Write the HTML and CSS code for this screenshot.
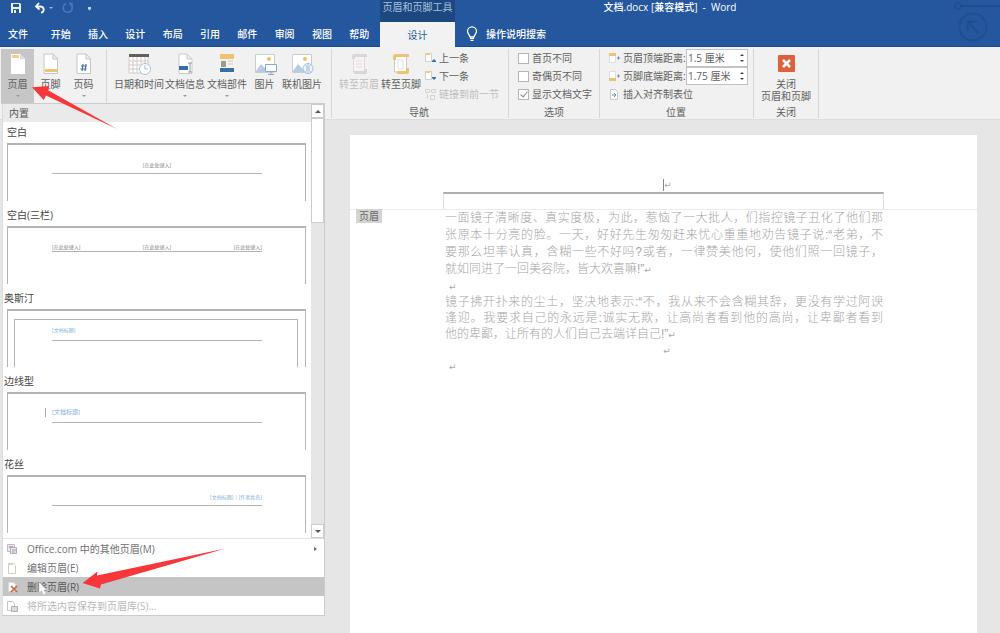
FILE: index.html
```html
<!DOCTYPE html>
<html lang="zh-CN">
<head>
<meta charset="utf-8">
<title>文档.docx [兼容模式] - Word</title>
<link rel="stylesheet" href="styles.css">
</head>
<body>
<header class="titlebar">
  <div class="title-row">
    <div class="quick">
      <button class="qbtn" aria-label="保存"><svg width="12" height="12" viewBox="0 0 12 12"><path d="M1 1h9l1 1v9H1z" fill="#e8f0fa"/><path d="M3 2h6v3H3zM3 7h6v4H3z" fill="#2457a0"/><path d="M4 8h2v3H4z" fill="#e8f0fa"/></svg></button>
      <button class="qbtn" aria-label="撤消"><svg width="20" height="12" viewBox="0 0 20 12"><path d="M5 1L2 4.500l3.500 3M2.500 4.500H6c5 0 4.500 6 1 6" fill="none" stroke="#f4f8ff" stroke-width="1.800"/><path d="M15 5h4l-2 2z" fill="#9fbbe0"/></svg></button>
      <button class="qbtn" aria-label="恢复"><svg width="12" height="12" viewBox="0 0 12 12"><path d="M4 1.500C1 3 .5 6 2 8.500c2 3 7 2 8-1 .7-2 0-4-1.500-5.500M7 1.500h3v3" fill="none" stroke="#4f7ab8" stroke-width="1.400"/></svg></button>
      <button class="qbtn" aria-label="自定义快速访问工具栏"><svg width="6" height="12" viewBox="0 0 6 12"><path d="M2 5h3v2L3.500 8.500 2 7z" fill="#c3d5ee"/></svg></button>
    </div>
    <div class="tool-title">页眉和页脚工具</div>
    <div class="doc-title">文档.docx [兼容模式]&nbsp; -&nbsp; Word</div>
  </div>
  <nav class="tabs">
    <div class="main-tabs">
      <button class="tab file">文件</button>
      <button class="tab">开始</button>
      <button class="tab">插入</button>
      <button class="tab">设计</button>
      <button class="tab">布局</button>
      <button class="tab">引用</button>
      <button class="tab">邮件</button>
      <button class="tab">审阅</button>
      <button class="tab">视图</button>
      <button class="tab">帮助</button>
    </div>
    <button class="tab active">设计</button>
    <button class="tell"><svg width="12" height="16" viewBox="0 0 12 16"><path d="M4 11C4 9 1.500 8 1.500 5.300a4.500 4.500 0 0 1 9 0C10.500 8 8 9 8 11z" fill="none" stroke="#fff" stroke-width="1.300"/><path d="M4 12.500h4M4.500 14.300h3" stroke="#fff" stroke-width="1.200"/></svg>操作说明搜索</button>
  </nav>
  <svg class="decor" width="50" height="46" viewBox="0 0 50 46" fill="none" stroke="#204e8f"><circle cx="8" cy="6" r="3" stroke-width="1.500"/><path d="M11 6h39" stroke-width="2"/><circle cx="23" cy="27" r="13.500" stroke-width="2"/><path d="M28.500 33L18 22M17.500 31v-9.500H27" stroke-width="2.500"/></svg>
</header>

<section class="ribbon">
  <div class="group g-header">
    <div class="tools">
      <button class="big on"><svg width="24" height="22" viewBox="0 0 24 22"><path d="M5 1h9l5 5v15H5z" fill="#fff"/><path d="M14 1v5h5z" fill="#ddd"/><path d="M6 2h7v3H6z" fill="#f3cf86"/></svg><span>页眉</span><i class="caret"></i></button>
      <button class="big"><svg width="24" height="22" viewBox="0 0 24 22"><path d="M5 1h9l4.500 4.500v15H5zM14 1v5h4.500" fill="#fff" stroke="#c6c6c6"/><path d="M6 16h12v3H6z" fill="#f0c374"/></svg><span>页脚</span></button>
      <button class="big"><svg width="24" height="22" viewBox="0 0 24 22"><path d="M5 1h9l4.500 4.500v15H5zM14 1v5h4.500" fill="#fff" stroke="#c6c6c6"/><path d="M11 11l-1 7M14 11l-1 7M9 13h6M8.500 16h6" stroke="#4673a3" stroke-width="1.200"/></svg><span>页码</span><i class="caret"></i></button>
    </div>
  </div>
  <div class="group g-insert">
    <div class="tools">
      <button class="big w50"><svg width="24" height="22" viewBox="0 0 24 22"><path d="M2 1h19v19H2z" fill="#fff"/><path d="M2 4v16h19V4M6 4v16M10 4v16M14 4v16M18 4v16M2 8h19M2 12h19M2 16h19" fill="none" stroke="#d3c9c6"/><path d="M2 1h20v3H2z" fill="#65605f"/><circle cx="18" cy="16" r="5.500" fill="#fff" stroke="#a8c4e0"/><path d="M18 12v4h3" fill="none" stroke="#a8b8c8"/></svg><span>日期和时间</span></button>
      <button class="big w42"><svg width="24" height="22" viewBox="0 0 24 22"><path d="M6 1h8l5 5v14.500H6zM14 1v5h5" fill="#fff" stroke="#ccc"/><path d="M6 13h9v4H6z" fill="#376da8"/><path d="M15 10h4M17 10v9M15 19h4" stroke="#8c99a8"/></svg><span>文档信息</span><i class="caret"></i></button>
      <button class="big w42"><svg width="24" height="22" viewBox="0 0 24 22"><path d="M5 1h15v20H5z" fill="#f7f3ea"/><path d="M5 1h14v5H5z" fill="#efc36d"/><path d="M6 8h5v6H6z" fill="#999"/><path d="M13 8h5M13 11h5" stroke="#c8c8c8"/><path d="M5 15h14v4H5z" fill="#376da8"/></svg><span>文档部件</span><i class="caret"></i></button>
      <button class="big w33"><svg width="24" height="22" viewBox="0 0 24 22"><path d="M2.500 1.500h19v18h-19z" fill="#fff" stroke="#ccc"/><path d="M3 18l5-7 5 5 3-2v5H3z" fill="#b6cce6"/><circle cx="16" cy="6" r="2" fill="#eec061"/><path d="M12.500 11.500h11v7h-11zM18 19v2M15 21.500h6" fill="#fff" stroke="#88a9ca"/></svg><span>图片</span></button>
      <button class="big w42"><svg width="24" height="22" viewBox="0 0 24 22"><path d="M2.500 1.500h19v18h-19z" fill="#fff" stroke="#ccc"/><path d="M3 18l5-7 5 5 3-2v5H3z" fill="#b6cce6"/><circle cx="15" cy="6" r="2" fill="#eec061"/><circle cx="18" cy="15.500" r="5" fill="#eef5fd" stroke="#a5c1df"/><path d="M18 10v11M15.500 12c2 2 2 5 0 7M20.500 12c-2 2-2 5 0 7" fill="none" stroke="#a5c1df"/></svg><span>联机图片</span></button>
    </div>
  </div>
  <div class="group g-nav">
    <div class="tools">
      <button class="big w42 off" disabled><svg width="24" height="22" viewBox="0 0 24 22"><path d="M6.500 3v16h11V3z" fill="#f7f3f4" stroke="#ddd8d9"/><path d="M5 3c0-1 1-2 2-2h13v3H8v2H5zM18 16h2v3c0 1-1 2-2 2H7v-3h11z" fill="#dcd6d7"/><path d="M9 8h6M9 11h6M9 14h6" stroke="#e3dede"/></svg><span>转至页眉</span></button>
      <button class="big w42"><svg width="24" height="22" viewBox="0 0 24 22"><path d="M5.500 3v16h12V3z" fill="#fff" stroke="#c8c8c8"/><path d="M4 3c0-1 1-2 2-2h14v3H7v3H4zM17 15h3v4c0 1-1 2-2 2H8v-3h9z" fill="#efc373"/><path d="M9 7h5v9H9z" fill="none" stroke="#e0e0e0"/></svg><span>转至页脚</span></button>
      <div class="stack nav-list">
        <button class="small"><svg width="12" height="12" viewBox="0 0 12 12"><path d="M1.500 1.500h6v8h-6z" fill="#fff" stroke="#d5d0ca"/><path d="M1 1h5v2H1z" fill="#f1cc88"/><path d="M8 9l2-2 2 2v1H8z" fill="#3e70ad"/></svg>上一条</button>
        <button class="small"><svg width="12" height="12" viewBox="0 0 12 12"><path d="M1.500 1.500h6v8h-6z" fill="#fff" stroke="#d5d0ca"/><path d="M1 1h5v2H1z" fill="#f1cc88"/><path d="M8 7h4v1l-2 2-2-2z" fill="#3e70ad"/></svg>下一条</button>
        <button class="small off" disabled><svg width="12" height="12" viewBox="0 0 12 12"><path d="M1.500 1.500h4v3h-4zM7.500 1.500h4v3h-4zM6.500 7.500h4v4h-4zM3.500 6v4H2" fill="none" stroke="#d4d4d4"/></svg>链接到前一节</button>
      </div>
    </div>
    <div class="caption">导航</div>
  </div>
  <div class="group g-opts">
    <div class="tools stack">
      <label class="check"><input type="checkbox">首页不同</label>
      <label class="check"><input type="checkbox">奇偶页不同</label>
      <label class="check"><input type="checkbox" checked>显示文档文字</label>
    </div>
    <div class="caption">选项</div>
  </div>
  <div class="group g-pos">
    <div class="tools stack">
      <div class="field"><svg width="12" height="12" viewBox="0 0 12 12"><path d="M1.500 1.500h6v9h-6z" fill="#fff" stroke="#ddd"/><path d="M1 1h7v3H1z" fill="#edc176"/><path d="M9 6h3M10.500 4.500v3" stroke="#6f8db0"/></svg><label for="top">页眉顶端距离:</label><span class="spin"><input id="top" type="text" value="1.5 厘米"><span class="steps"><button aria-label="增大顶端距离"></button><button class="down" aria-label="减小顶端距离"></button></span></span></div>
      <div class="field"><svg width="12" height="12" viewBox="0 0 12 12"><path d="M1.500 1.500h6v9h-6z" fill="#fff" stroke="#ddd"/><path d="M1 8h7v3H1z" fill="#edc176"/><path d="M9 6h3M10.500 4.500v3" stroke="#6f8db0"/></svg><label for="bottom">页脚底端距离:</label><span class="spin"><input id="bottom" type="text" value="1.75 厘米"><span class="steps"><button aria-label="增大底端距离"></button><button class="down" aria-label="减小底端距离"></button></span></span></div>
      <button class="small"><svg width="12" height="12" viewBox="0 0 12 12"><path d="M2.500 1.500h5l2 2v8h-7z" fill="#fff" stroke="#c5c9ce"/><path d="M4 7h4M6 5l2 2-2 2" fill="none" stroke="#7089a6"/></svg>插入对齐制表位</button>
    </div>
    <div class="caption">位置</div>
  </div>
  <div class="group g-close">
    <div class="tools">
      <button class="big close"><svg width="24" height="22" viewBox="0 0 24 22"><rect x="4" y="2" width="17" height="17" rx="1" fill="#de6239"/><path d="M9 7l7 7M16 7l-7 7" stroke="#fff" stroke-width="2.500"/></svg><span>关闭<br>页眉和页脚</span></button>
    </div>
    <div class="caption">关闭</div>
  </div>
</section>

<main class="workspace">
  <article class="page">
    <div class="page-header"><span class="insertion"></span><span class="mark">↵</span></div>
    <div class="header-frame"></div>
    <span class="header-tag">页眉</span>
    <div class="copy">
      <p class="first"><span>一面镜子清晰度、真实度极，为此，惹恼了一大批人，们指控镜子丑化了他们那</span><span>张原本十分亮的脸。一天，好好先生匆匆赶来忧心重重地劝告镜子说:“老弟，不</span><span>要那么坦率认真，含糊一些不好吗?或者，一律赞美他何，使他们照一回镜子，</span><span class="last">就如同进了一回美容院，皆大欢喜嘛!”<b class="mark">↵</b></span></p>
      <p class="empty"><b class="mark">↵</b></p>
      <p><span>镜子拂开扑来的尘土，坚决地表示:“不，我从来不会含糊其辞，更没有学过阿谀</span><span>逢迎。我要求自己的永远是:诚实无欺，让高尚者看到他的高尚，让卑鄙者看到</span><span class="last">他的卑鄙，让所有的人们自己去端详自己!”<b class="mark">↵</b></span></p>
      <p class="center"><b class="mark">↵</b></p>
      <p class="empty"><b class="mark">↵</b></p>
    </div>
  </article>
</main>

<div class="menu">
  <div class="gallery">
    <div class="list">
      <div class="heading">内置</div>
      <button class="item"><span class="name in">空白</span><span class="thumb"><span class="line mid"><em>[在此处键入]</em></span></span></button>
      <button class="item"><span class="name in">空白(三栏)</span><span class="thumb"><span class="line three"><em>[在此处键入]</em><em>[在此处键入]</em><em>[在此处键入]</em></span></span></button>
      <button class="item"><span class="name">奥斯汀</span><span class="thumb framed"><span class="line blue"><em>[文档标题]</em></span></span></button>
      <button class="item"><span class="name">边线型</span><span class="thumb"><span class="line blue side"><em>[文档标题]</em></span></span></button>
      <button class="item"><span class="name">花丝</span><span class="thumb"><span class="line blue right"><em>[文档标题] | [作者姓名]</em></span></span></button>
    </div>
    <div class="scroll"><button class="arrow" aria-label="向上滚动"><i></i></button><div class="handle"></div><button class="arrow down" aria-label="向下滚动"><i></i></button></div>
  </div>
  <button class="cmd"><svg width="12" height="12" viewBox="0 0 12 12"><path d="M1.500 1.500h7v7h-7z" fill="#eee8ef" stroke="#c3b9c6"/><path d="M3 3h4v2H3z" fill="#d69a9a"/><path d="M4.500 4.500h6v6h-6z" fill="#dfe8f4" stroke="#a3b3ca"/><path d="M6 7h4M6 9h3" stroke="#c99"/></svg>Office.com 中的其他页眉(M)<i class="more"></i></button>
  <button class="cmd"><svg width="12" height="12" viewBox="0 0 12 12"><path d="M2.500 1.500h5l2 2v8h-7z" fill="#fff" stroke="#d3ccc2"/><path d="M3 2h4v1H3z" fill="#f1d8a8"/></svg>编辑页眉(E)</button>
  <button class="cmd hot"><svg width="12" height="12" viewBox="0 0 12 12"><path d="M2.500 1.500h5l2 2v7h-7z" fill="#fff" stroke="#e2d5c5"/><path d="M5 5l6 6M11 5l-6 6" stroke="#cd6648" stroke-width="1.700"/></svg>删除页眉(R)</button>
  <button class="cmd off" disabled><svg width="12" height="12" viewBox="0 0 12 12"><path d="M1.500 1.500h5l2 2v7h-7z" fill="#fff" stroke="#c4c4c4"/><path d="M5.500 6.500h6v5h-6z" fill="#ddd" stroke="#b0b0b0"/></svg>将所选内容保存到页眉库(S)...</button>
</div>

<svg class="overlay" width="240" height="633" viewBox="0 0 240 633" aria-hidden="true">
  <path d="M39 582v11l2.500-2 2 4 2.500-1-2-4h3z" fill="#fff" stroke="#aaa" stroke-width=".5"/>
  <path d="M32 87.300L49 86l-.5 4.500L117 129 46 95.500 43.700 100z" fill="#f8373a"/>
  <path d="M82.500 583l15-11.500-.5 4 128.500-27L101 584.500l-1 4z" fill="#f8373a"/>
</svg>
</body>
</html>
```
FILE: styles.css
```css
* { box-sizing: border-box; }
body {
  margin: 0;
  min-height: 100vh;
  display: flex;
  flex-direction: column;
  position: relative;
  background: #e6e6e6;
  color: #606060;
  font: 10px/14px "Open Sans", "Noto Sans CJK SC", sans-serif;
}
button, input { font: inherit; color: inherit; margin: 0; }
button { border: 0; padding: 0; background: none; white-space: nowrap; }
svg { display: block; flex: none; }

.titlebar { position: relative; background: #25579f; color: #fff; border-bottom: 1px solid #1d4a8a; }
.title-row { display: flex; height: 22px; }
.quick { flex: none; width: 380px; display: flex; gap: 12px; padding: 2px 0 0 10px; align-items: flex-start; }
.quick .qbtn:nth-child(3) { margin-left: -4px; }
.tool-title { flex: none; width: 75px; background: #1c477f; color: #a9c0de; text-align: center; white-space: nowrap; }
.doc-title { flex: 1; text-align: center; padding-right: 115px; font-weight: 500; white-space: nowrap; }
.tabs { display: flex; height: 24px; align-items: stretch; }
.main-tabs { flex: none; display: flex; width: 380px; padding-right: 2px; }
.tab { flex: 1; font-weight: 500; }
.tab.file { flex: none; width: 42px; padding-right: 6px; }
.tab.active { flex: none; width: 75px; background: #f2f2f2; color: #2b5c9f; margin-bottom: -1px; font-weight: 400; }
.tell { display: flex; align-items: center; gap: 8px; padding-left: 11px; font-weight: 500; }
.decor { position: absolute; right: 0; top: 0; }

.ribbon { display: flex; height: 73px; background: #f1f1f1; border-bottom: 1px solid #dcdcdc; }
.group { flex: none; display: flex; flex-direction: column; justify-content: space-between; margin: 2px 0 1px; border-right: 1px solid #d6d6d6; }
.tools { display: flex; align-items: flex-start; }
.caption { text-align: center; line-height: 12px; }
.g-header { width: 107px; padding-left: 1px; }
.g-insert { width: 225px; padding-left: 7px; }
.g-nav { width: 177px; padding-left: 6px; }
.g-nav .caption { padding-right: 8px; }
.nav-list { padding-left: 2px; }
.g-opts { width: 91px; padding-left: 9px; }
.g-opts .caption, .g-pos .caption { padding-right: 9px; }
.g-pos { width: 154px; padding-left: 8px; }
.g-close { width: 65px; }
.big { width: 33px; height: 55px; display: flex; flex-direction: column; align-items: center; padding-top: 4px; }
.big span { line-height: 12px; padding-top: 3px; }
.big.on { background: #c6c6c6; }
.big.close { width: 100%; }
.w50 { width: 50px; }
.w42 { width: 42px; }
.w33 { width: 33px; }
.caret { border: 2px solid transparent; border-top-color: #999; border-bottom: 0; margin-top: 5px; }
.big.off, .small.off { color: #bdbdbd; }
.stack { display: flex; flex-direction: column; align-items: flex-start; }
.small, .check, .field { display: flex; align-items: center; gap: 3px; height: 18px; white-space: nowrap; }
.check input { appearance: none; position: relative; width: 11px; height: 11px; margin: 0; border: 1px solid #b5b5b5; background: #fff; }
.check input:checked::after { content: ""; position: absolute; left: 3px; top: 0; width: 3px; height: 6px; border: solid #888; border-width: 0 1px 1px 0; transform: rotate(40deg); }
.field label { width: 60px; }
.spin { display: flex; width: 62px; height: 18px; background: #fff; border: 1px solid #c3c3c3; }
.spin input { width: 46px; border: 0; padding: 0 0 0 1px; background: none; outline: 0; }
.steps { display: flex; flex-direction: column; justify-content: space-evenly; margin-left: auto; padding-right: 3px; }
.steps button { border: 2px solid transparent; border-bottom-color: #444; border-top: 0; }
.steps .down { border-top: 2px solid #444; border-bottom: 0; }

.workspace { flex: 1; display: flex; padding: 15px 23px 0 350px; }
.page { position: relative; flex: 1; background: #fff; }
.page-header { display: flex; align-items: center; justify-content: center; height: 57px; margin: 0 93px; padding: 42px 0 0 8px; }
.insertion { width: 1px; height: 12px; background: #888; }
.mark { font: 9px/10px "DejaVu Sans", sans-serif; color: #aaa; }
.header-frame { height: 18px; margin: 0 93px; border: 1px solid #ddd; border-top: 2px solid #aeaeae; }
.page::before { content: ""; position: absolute; left: 0; right: 0; top: 74px; border-top: 1px solid #ebebeb; }
.header-tag { position: absolute; left: 6px; top: 74px; width: 26px; line-height: 14px; text-align: center; background: #d4d4d4; color: #666; }
.copy { margin: 0 94px 0 95px; font: 300 12px/16px "Liberation Sans", "Noto Sans CJK SC", sans-serif; color: #a6a6a6; }
.copy p { margin: 0; }
.copy p span { display: block; text-align: justify; text-align-last: justify; white-space: nowrap; }
.copy p .last { text-align-last: left; }
.copy .first { line-height: 17px; }
.copy .empty { padding-left: 4px; }
.copy .center { text-align: center; padding-left: 6px; }

.menu { position: absolute; left: 2px; top: 103px; width: 323px; background: #fff; border: 1px solid #ccc; border-left-color: #ddd; }
.gallery { display: flex; border-bottom: 1px solid #e3e3e3; }
.list { flex: 1; padding-bottom: 1px; }
.heading { height: 18px; line-height: 18px; padding-left: 6px; background: #eaeaea; color: #555; }
.item { display: block; width: 100%; height: 83px; text-align: left; color: #444; }
.name { display: block; height: 21px; line-height: 20px; padding-left: 1px; }
.name.in { padding-left: 4px; }
.thumb { display: flex; height: 58px; margin: 0 5px 4px 4px; padding: 0 43px 0 44px; border: solid #b4b4b4; border-width: 2px 1px 0; }
.line { flex: 1; display: flex; height: 29px; align-items: flex-end; border-bottom: 1px solid #b4b4b4; color: #888; }
.line em { font-size: 5px; line-height: 7px; font-style: normal; padding-bottom: 4px; }
.mid { justify-content: center; }
.three { justify-content: space-between; height: 24px; }
.three em { padding-bottom: 0; }
.blue { color: #85afdc; }
.right { justify-content: flex-end; }
.side em { font-size: 6px; padding-bottom: 6px; margin-left: -7px; padding-left: 7px; position: relative; }
.side em::before { content: ""; position: absolute; left: 0; top: -1px; height: 9px; border-left: 1px solid #aaa; }
.framed { position: relative; padding: 0 43px 0 44px; }
.framed .line { height: 30px; }
.framed::before { content: ""; position: absolute; left: 6px; right: 7px; top: 8px; bottom: 0; border: solid #b4b4b4; border-width: 1px 1px 0; }
.framed em { padding-bottom: 6px; }
.scroll { flex: none; width: 13px; display: flex; flex-direction: column; background: #e6e6e6; }
.arrow { height: 14px; width: 13px; display: flex; align-items: center; justify-content: center; background: #fff; border: 1px solid #ccc; }
.arrow i { border: 3px solid transparent; border-bottom-color: #555; border-top: 0; }
.arrow.down { margin-top: auto; }
.arrow.down i { border-top: 3px solid #555; border-bottom: 0; }
.handle { height: 105px; background: #fff; border: 1px solid #ccc; }
.cmd { display: flex; align-items: center; gap: 9px; width: 100%; height: 19px; padding: 0 7px 0 3px; color: #707070; }
.cmd.hot { background: #c5c5c5; color: #555; }
.cmd.off { color: #b8b8b8; }
.more { margin-left: auto; border: 2px solid transparent; border-left: 3px solid #666; border-right: 0; }
.overlay { position: absolute; left: 0; top: 0; pointer-events: none; }
```
